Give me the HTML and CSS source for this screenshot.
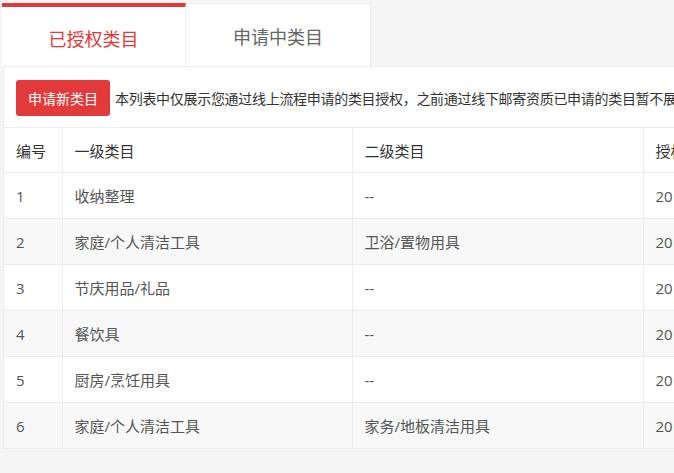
FILE: index.html
```html
<!DOCTYPE html>
<html lang="zh-CN">

<head>
    <meta charset="UTF-8">
    <title>类目授权</title>
    <link rel="stylesheet" href="styles.css">
</head>

<body>
    <div class="page">
        <!-- Tabs -->
        <div class="tabs">
            <div class="tab active">已授权类目</div>
            <div class="tab">申请中类目</div>
        </div>

        <!-- Panel -->
        <div class="panel">
            <div class="toolbar">
                <button class="btn-apply">申请新类目</button>
                <span class="note">本列表中仅展示您通过线上流程申请的类目授权，之前通过线下邮寄资质已申请的类目暂不展示</span>
            </div>

            <table class="cat-table">
                <thead>
                    <tr>
                        <th class="col-no">编号</th>
                        <th class="col-one">一级类目</th>
                        <th class="col-two">二级类目</th>
                        <th class="col-time">授权时间</th>
                    </tr>
                </thead>
                <tbody>
                    <tr>
                        <td>1</td>
                        <td>收纳整理</td>
                        <td>--</td>
                        <td>2019-05-16 10:21:36</td>
                    </tr>
                    <tr>
                        <td>2</td>
                        <td>家庭/个人清洁工具</td>
                        <td>卫浴/置物用具</td>
                        <td>2019-05-16 10:21:36</td>
                    </tr>
                    <tr>
                        <td>3</td>
                        <td>节庆用品/礼品</td>
                        <td>--</td>
                        <td>2019-05-16 10:21:36</td>
                    </tr>
                    <tr>
                        <td>4</td>
                        <td>餐饮具</td>
                        <td>--</td>
                        <td>2019-05-16 10:21:36</td>
                    </tr>
                    <tr>
                        <td>5</td>
                        <td>厨房/烹饪用具</td>
                        <td>--</td>
                        <td>2019-05-16 10:21:36</td>
                    </tr>
                    <tr>
                        <td>6</td>
                        <td>家庭/个人清洁工具</td>
                        <td>家务/地板清洁用具</td>
                        <td>2019-05-16 10:21:36</td>
                    </tr>
                </tbody>
            </table>
        </div>
    </div>
</body>

</html>
```

FILE: styles.css
```css
* {
    box-sizing: border-box;
    margin: 0;
    padding: 0;
}

html,
body {
    background-color: #f5f5f5;
    height: 100%;
    overflow: hidden;
}

body {
    font-family: "Open Sans", "Noto Sans CJK SC", sans-serif;
    color: #333;
}

.page {
    padding: 3px 0 0 2px;
    width: 674px;
    height: 473px;
    overflow: hidden;
}

.tabs {
    display: flex;
}

.tab {
    width: 185px;
    height: 63px;
    display: flex;
    align-items: center;
    justify-content: center;
    padding-top: 2px;
    background-color: #fff;
    border-top: 1px solid #ececec;
    border-right: 1px solid #ececec;
    font-size: 18px;
    color: #666;
}

.tab.active {
    width: 184px;
    border-top: 4px solid #e23a3a;
    color: #e23a3a;
}

.panel {
    margin-left: 1px;
    width: 900px;
    background-color: #fff;
    border: 1px solid #ececec;
    border-bottom: none;
}

.toolbar {
    display: flex;
    align-items: center;
    padding: 13px 12px 11px;
    white-space: nowrap;
}

.btn-apply {
    width: 94px;
    height: 36px;
    background-color: #e23a3a;
    color: #fff;
    border: none;
    border-radius: 3px;
    font-family: inherit;
    font-size: 14px;
    margin-right: 5px;
}

.note {
    font-size: 14px;
    letter-spacing: -0.3px;
    color: #333;
}

.cat-table {
    border-collapse: collapse;
    table-layout: fixed;
    width: 900px;
    font-size: 15px;
}

.cat-table th,
.cat-table td {
    height: 46px;
    padding: 0 12px;
    text-align: left;
    border: 1px solid #ececec;
    border-left: none;
    white-space: nowrap;
    overflow: hidden;
}

.cat-table th {
    height: 45px;
    font-weight: normal;
    color: #333;
}

.cat-table td {
    color: #555;
}

.cat-table th + th,
.cat-table td + td {
    border-left: 1px solid #ececec;
}

.cat-table tbody tr:nth-child(even) td {
    background-color: #f8f8f8;
}

.col-no {
    width: 58px;
}

.col-one {
    width: 290px;
}

.col-two {
    width: 291px;
}

.col-time {
    width: 261px;
}
```
